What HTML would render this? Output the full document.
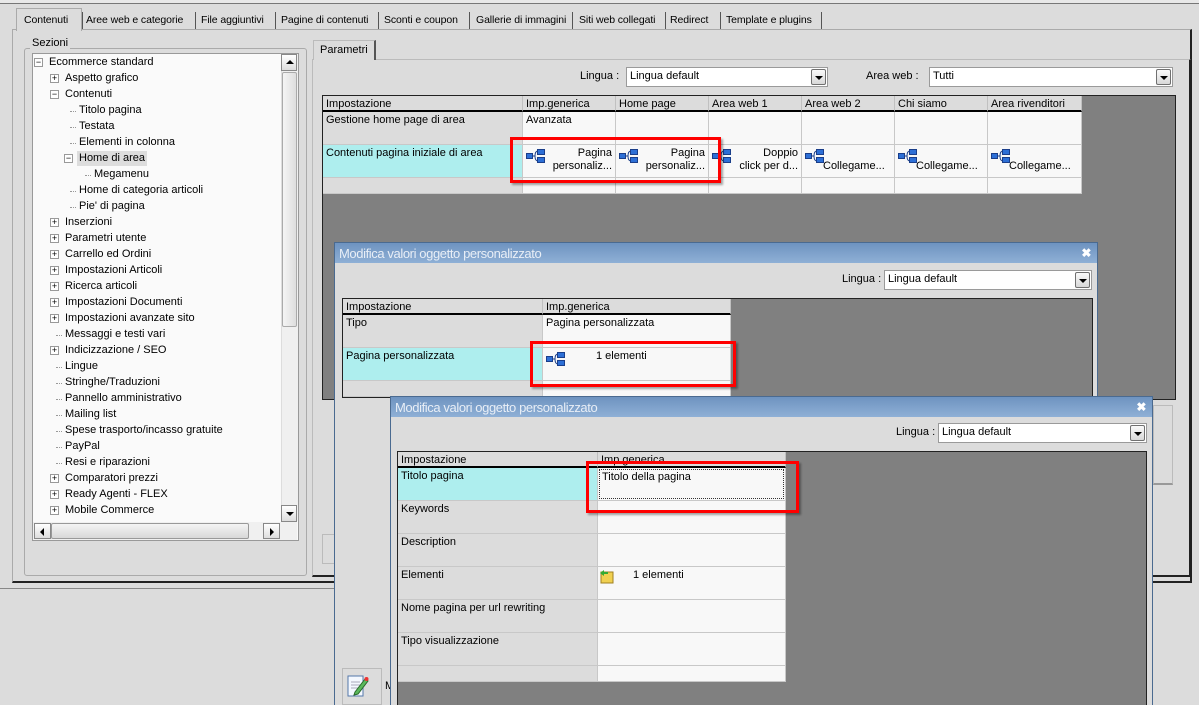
<!DOCTYPE html>
<html style="width:1199px;height:705px;overflow:hidden"><head><meta charset="utf-8">
<style>
*{box-sizing:border-box;margin:0;padding:0}
body{width:1199px;height:705px;overflow:hidden;background:#dcdcdc;font-family:"Liberation Sans",sans-serif;font-size:11px;color:#000;position:relative}
.a{position:absolute}
.t{position:absolute;white-space:nowrap;line-height:13px}
.sep{position:absolute;top:12px;width:1px;height:17px;background:#555}
.cell{position:absolute;border-right:1px solid #c8c8c8;border-bottom:1px solid #c8c8c8;padding:2px 3px;line-height:13px;overflow:hidden;white-space:nowrap}
.w{background:#f8f8f8}
.g{background:#dcdcdc}
.c{background:#aeeeee}
.hd{position:absolute;background:#dcdcdc;border-right:1px solid #c0c0c0;padding:2px 3px;line-height:13px;border-bottom:2px solid #000;white-space:nowrap}
.red{position:absolute;border:3px solid #f00;box-shadow:2px 2px 2px rgba(0,0,0,.35)}
.sel{position:absolute;background:#fff;border:1px solid #9a9a9a;padding:2px 3px;line-height:13px}
.btn{position:absolute;right:1px;top:1px;width:15px;height:16px;border:1px solid #707070;border-radius:2px;background:linear-gradient(#fafafa,#d8d8d8)}
.btn:after{content:"";position:absolute;left:3px;top:6px;border-left:4px solid transparent;border-right:4px solid transparent;border-top:4px solid #000}
.title{position:absolute;left:0;right:0;top:0;height:20px;background:linear-gradient(#6e93c0,#8fb0d6);color:#e8eef6;font-size:13px;padding:3px 4px;letter-spacing:-.4px}
.x{position:absolute;right:6px;top:3px;color:#fff;font-weight:bold;font-size:12px}
.pm{position:absolute;width:9px;height:9px;border:1px solid #999;background:#fff;font-size:9px;line-height:7px;text-align:center}
.tb{font-size:10.5px;letter-spacing:-.1px}
</style></head><body>
<div class="a" style="left:0;top:0;width:1199px;height:4px;background:#e8e8e8;border-bottom:1px solid #777"></div>
<div class="a" style="left:12px;top:29px;width:1180px;height:554px;border:1px solid #aaa;border-bottom:2px solid #222;border-right:2px solid #222"></div>
<div class="a" style="left:16px;top:8px;width:66px;height:23px;background:#dcdcdc;border:1px solid #aaa;border-bottom:none"></div>
<div class="t tb" style="left:24px;top:14px">Contenuti</div>
<div class="sep" style="left:82px"></div><div class="t tb" style="left:86px;top:14px">Aree web e categorie</div>
<div class="sep" style="left:195px"></div><div class="t tb" style="left:201px;top:14px">File aggiuntivi</div>
<div class="sep" style="left:275px"></div><div class="t tb" style="left:281px;top:14px">Pagine di contenuti</div>
<div class="sep" style="left:378px"></div><div class="t tb" style="left:384px;top:14px">Sconti e coupon</div>
<div class="sep" style="left:469px"></div><div class="t tb" style="left:476px;top:14px">Gallerie di immagini</div>
<div class="sep" style="left:572px"></div><div class="t tb" style="left:579px;top:14px">Siti web collegati</div>
<div class="sep" style="left:665px"></div><div class="t tb" style="left:670px;top:14px">Redirect</div>
<div class="sep" style="left:720px"></div><div class="t tb" style="left:726px;top:14px">Template e plugins</div>
<div class="sep" style="left:821px"></div>
<div class="a" style="left:24px;top:48px;width:283px;height:528px;border:1px solid #aaa;border-radius:3px"></div>
<div class="t" style="left:30px;top:37px;background:#dcdcdc;padding:0 2px">Sezioni</div>
<div class="a" style="left:32px;top:53px;width:267px;height:488px;background:#fafafa;border:1px solid #999"></div>
<div id="tree"></div>
<div class="a" style="left:281px;top:54px;width:17px;height:467px;background:#f0f0f0;border-left:1px solid #ddd"></div>
<div class="a" style="left:281px;top:54px;width:16px;height:17px;border:1px solid #888;background:linear-gradient(#fff,#ddd)"><div class="a" style="left:4px;top:5px;border-left:4px solid transparent;border-right:4px solid transparent;border-bottom:4px solid #000"></div></div>
<div class="a" style="left:282px;top:72px;width:15px;height:255px;border:1px solid #aaa;background:linear-gradient(90deg,#f4f4f4,#dedede);border-radius:2px"></div>
<div class="a" style="left:281px;top:505px;width:16px;height:17px;border:1px solid #888;background:linear-gradient(#fff,#ddd)"><div class="a" style="left:4px;top:6px;border-left:4px solid transparent;border-right:4px solid transparent;border-top:4px solid #000"></div></div>
<div class="a" style="left:33px;top:522px;width:264px;height:18px;background:#f0f0f0"></div>
<div class="a" style="left:34px;top:523px;width:17px;height:16px;border:1px solid #888;background:linear-gradient(#fff,#ddd)"><div class="a" style="left:5px;top:4px;border-top:4px solid transparent;border-bottom:4px solid transparent;border-right:4px solid #000"></div></div>
<div class="a" style="left:51px;top:523px;width:198px;height:16px;border:1px solid #999;background:linear-gradient(#f4f4f4,#d8d8d8);border-radius:2px"></div>
<div class="a" style="left:263px;top:523px;width:17px;height:16px;border:1px solid #888;background:linear-gradient(#fff,#ddd)"><div class="a" style="left:6px;top:4px;border-top:4px solid transparent;border-bottom:4px solid transparent;border-left:4px solid #000"></div></div>
<div class="a" style="left:312px;top:59px;width:879px;height:518px;border:1px solid #bbb;border-right:2px solid #222;border-bottom:2px solid #222"></div>
<div class="a" style="left:313px;top:40px;width:63px;height:20px;background:#dcdcdc;border:1px solid #bbb;border-bottom:none;border-right:2px solid #555"></div>
<div class="t" style="left:320px;top:44px">Parametri</div>
<div class="t" style="left:580px;top:70px">Lingua :</div>
<div class="sel" style="left:626px;top:67px;width:202px;height:20px">Lingua default<div class="btn"></div></div>
<div class="t" style="left:866px;top:70px">Area web :</div>
<div class="sel" style="left:929px;top:67px;width:244px;height:20px">Tutti<div class="btn"></div></div>
<div class="a" style="left:322px;top:95px;width:854px;height:305px;background:#808080;border:1px solid #222"></div>
<div id="g1"></div>
<div class="red" style="left:510px;top:137px;width:211px;height:46px"></div>
<div class="a" style="left:322px;top:534px;width:14px;height:30px;border:1px solid #bbb"></div>
<div class="a" style="left:1153px;top:405px;width:20px;height:80px;border:1px solid #bbb;border-bottom:2px solid #999"></div>
<div class="a" style="left:0;top:588px;width:335px;height:1px;background:#888"></div>
<div class="a" style="left:334px;top:242px;width:764px;height:470px;background:#dcdcdc;border:1px solid #4a6a90">
 <div class="title">Modifica valori oggetto personalizzato<span class="x">✖</span></div>
</div>
<div class="t" style="left:842px;top:273px">Lingua :</div>
<div class="sel" style="left:884px;top:270px;width:208px;height:20px">Lingua default<div class="btn"></div></div>
<div class="a" style="left:342px;top:298px;width:751px;height:100px;background:#808080;border:1px solid #222"></div>
<div id="g2"></div>
<div class="red" style="left:530px;top:341px;width:206px;height:46px"></div>
<div class="a" style="left:342px;top:668px;width:40px;height:37px;border:1px solid #bbb"></div>
<svg class="a" style="left:347px;top:674px" width="22" height="24"><rect x="1" y="2" width="15" height="20" fill="#f4f8ff" stroke="#5577aa"/><path d="M4 8h9M4 11h9M4 14h7" stroke="#aab"/><path d="M8 18l10-13 3 2-10 13-4 1z" fill="#5cb85c" stroke="#2a6a2a"/><circle cx="19.5" cy="5" r="2" fill="#e33"/></svg>
<div class="t" style="left:385px;top:680px">M</div>
<div class="a" style="left:390px;top:396px;width:763px;height:320px;background:#dcdcdc;border:1px solid #4a6a90">
 <div class="title">Modifica valori oggetto personalizzato<span class="x">✖</span></div>
</div>
<div class="t" style="left:896px;top:426px">Lingua :</div>
<div class="sel" style="left:938px;top:423px;width:209px;height:20px">Lingua default<div class="btn"></div></div>
<div class="a" style="left:397px;top:451px;width:750px;height:260px;background:#808080;border:1px solid #222"></div>
<div id="g3"></div>
<div class="red" style="left:586px;top:461px;width:213px;height:52px"></div>
<script>
function ic(){return '<svg width="20" height="14" style="position:absolute;left:3px;top:4px"><rect x="0.5" y="4.5" width="6" height="5" fill="#2d6fd6" stroke="#1a3e8a"/><path d="M7 7h2M9 7q0-5 3-5M9 7q0 5 3 5" stroke="#1a3e8a" fill="none"/><rect x="11.5" y="0.5" width="7" height="5" fill="#2d6fd6" stroke="#1a3e8a"/><rect x="11.5" y="8.5" width="7" height="5" fill="#2d6fd6" stroke="#1a3e8a"/></svg>';}
var h='';
var T=[["Ecommerce standard",0,"-"],["Aspetto grafico",1,"+"],["Contenuti",1,"-"],["Titolo pagina",2],["Testata",2],["Elementi in colonna",2],["Home di area",2,"-"],["Megamenu",3],["Home di categoria articoli",2],["Pie' di pagina",2],["Inserzioni",1,"+"],["Parametri utente",1,"+"],["Carrello ed Ordini",1,"+"],["Impostazioni Articoli",1,"+"],["Ricerca articoli",1,"+"],["Impostazioni Documenti",1,"+"],["Impostazioni avanzate sito",1,"+"],["Messaggi e testi vari",1],["Indicizzazione / SEO",1,"+"],["Lingue",1],["Stringhe/Traduzioni",1],["Pannello amministrativo",1],["Mailing list",1],["Spese trasporto/incasso gratuite",1],["PayPal",1],["Resi e riparazioni",1],["Comparatori prezzi",1,"+"],["Ready Agenti - FLEX",1,"+"],["Mobile Commerce",1,"+"]];
var X=[49,65,79,94];
T.forEach(function(r,i){var y=56+16*i;var x=X[r[1]];
 if(r[2]) h+='<div class="pm" style="left:'+(x-15)+'px;top:'+(y+2)+'px">'+(r[2]=="+"?"+":"−")+'</div>';
 else h+='<div class="a" style="left:'+(x-9)+'px;top:'+(y+7)+'px;width:6px;border-top:1px dotted #999"></div>';
 h+='<div class="t" style="left:'+x+'px;top:'+y+'px;'+(i==6?'background:#ddd;padding:1px 2px;margin:-1px -2px':'')+'">'+r[0]+'</div>';});
document.getElementById('tree').innerHTML=h;
function grid(id,x0,y0,cols,hdrs,rows,hh,rh){
 var s='',x=x0;
 cols.forEach(function(w,j){s+='<div class="hd" style="left:'+x+'px;top:'+y0+'px;width:'+w+'px;height:'+hh+'px">'+hdrs[j]+'</div>';x+=w;});
 var y=y0+hh;
 rows.forEach(function(r){x=x0;cols.forEach(function(w,j){var c=r[j]||'';var cls=j==0?(r.cyan?'c':'g'):'w';
  s+='<div class="cell '+cls+'" style="left:'+x+'px;top:'+y+'px;width:'+w+'px;height:'+(r.h||rh)+'px">'+c+'</div>';x+=w;});y+=(r.h||rh);});
 document.getElementById(id).innerHTML=s;
}
function two(a,b){return ic()+'<div style="text-align:right;padding-left:18px">'+a+'<br>'+b+'</div>';}
function one(a){return ic()+'<div style="padding-left:18px;padding-top:13px">'+a+'</div>';}
var r2=["Contenuti pagina iniziale di area",two("Pagina","personaliz..."),two("Pagina","personaliz..."),two("Doppio","click per d..."),one("Collegame..."),one("Collegame..."),one("Collegame...")];r2.cyan=1;
var rr=[["Gestione home page di area","Avanzata"],r2,[]];rr[2].h=16;
grid('g1',323,96,[200,93,93,93,93,93,94],["Impostazione","Imp.generica","Home page","Area web 1","Area web 2","Chi siamo","Area rivenditori"],rr,16,33);
var p2=["Pagina personalizzata",ic()+'<div style="padding-left:50px">1 elementi</div>'];p2.cyan=1;
var t3=[["Tipo","Pagina personalizzata"],p2,[]];t3[2].h=16;
grid('g2',343,299,[200,188],["Impostazione","Imp.generica"],t3,16,33);
var a=["Titolo pagina",'<div style="border:1px dotted #333;margin:-1px -2px;height:30px;padding:1px 2px">Titolo della pagina</div>'];a.cyan=1;
var el=["Elementi",'<svg width="16" height="16" style="position:absolute;left:1px;top:2px"><rect x="2" y="3" width="12" height="11" fill="#f0d050" stroke="#a08020"/><path d="M1 4l4 3v-2h4v-2h-4v-2z" fill="#3a3"/></svg><div style="padding-left:32px">1 elementi</div>'];
var t4=[a,["Keywords"],["Description"],el,["Nome pagina per url rewriting"],["Tipo visualizzazione"],[]];t4[6].h=16;
grid('g3',398,452,[200,188],["Impostazione","Imp.generica"],t4,16,33);
</script>
</body></html>
